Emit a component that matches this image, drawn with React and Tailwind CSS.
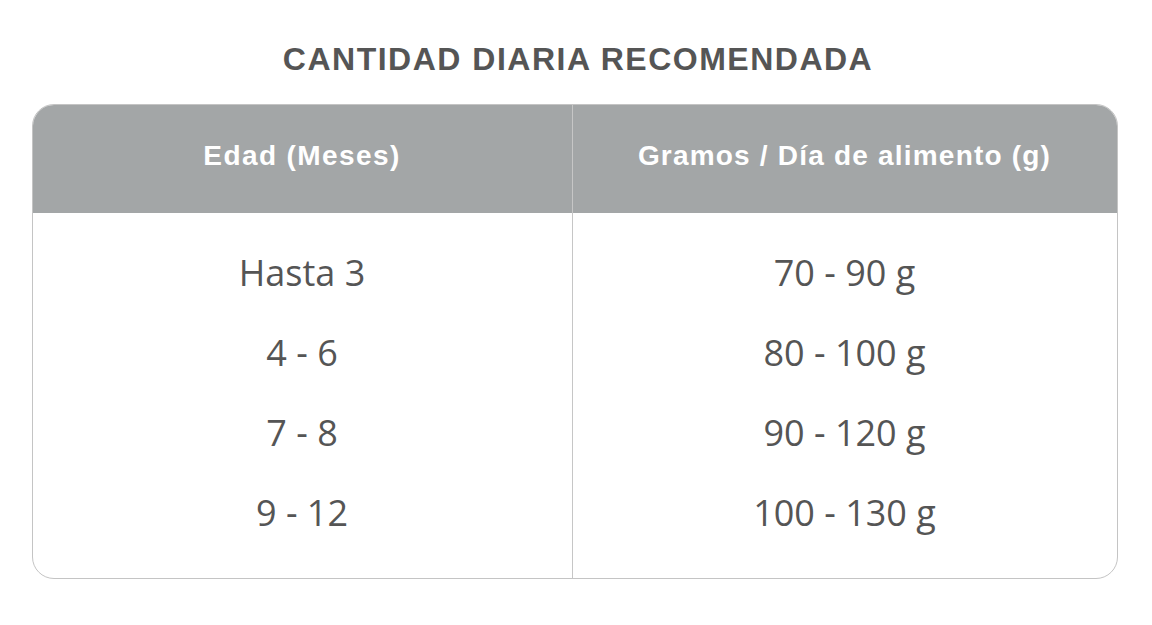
export default function App() {
  const left = ["Hasta 3", "4 - 6", "7 - 8", "9 - 12"];
  const right = ["70 - 90 g", "80 - 100 g", "90 - 120 g", "100 - 130 g"];
  return (
    <div className="w-[1152px] h-[625px] bg-white flex flex-col items-center pt-[43px]">
      <h1
        className="text-[32px] leading-none font-bold text-[#555555] tracking-[1.5px] ml-[4px]"
        style={{ fontFamily: '"Liberation Sans", Arial, sans-serif' }}
      >
        CANTIDAD DIARIA RECOMENDADA
      </h1>
      <div className="mt-[29px] w-[1086px] h-[475px] border border-[#c4c4c4] rounded-[22px] overflow-hidden grid grid-cols-[540px_1fr] ml-[-3px]">
        <div className="border-r border-[#c6c6c6] flex flex-col">
          <div
            className="h-[108px] bg-[#a3a6a7] flex items-center justify-center pb-[7px] text-white font-bold text-[28px] leading-none tracking-[1.4px]"
            style={{ fontFamily: '"Liberation Sans", Arial, sans-serif' }}
          >
            Edad (Meses)
          </div>
          <div className="flex flex-col pt-[20px]" style={{ fontFamily: '"Open Sans", sans-serif' }}>
            {left.map((t) => (
              <div key={t} className="h-[80px] flex items-center justify-center text-[36px] leading-none text-[#555555]">
                {t}
              </div>
            ))}
          </div>
        </div>
        <div className="flex flex-col">
          <div
            className="h-[108px] bg-[#a3a6a7] flex items-center justify-center pb-[7px] text-white font-bold text-[28px] leading-none tracking-[1.2px]"
            style={{ fontFamily: '"Liberation Sans", Arial, sans-serif' }}
          >
            Gramos / Día de alimento (g)
          </div>
          <div className="flex flex-col pt-[20px]" style={{ fontFamily: '"Open Sans", sans-serif' }}>
            {right.map((t) => (
              <div key={t} className="h-[80px] flex items-center justify-center text-[36px] leading-none text-[#555555]">
                {t}
              </div>
            ))}
          </div>
        </div>
      </div>
    </div>
  );
}
